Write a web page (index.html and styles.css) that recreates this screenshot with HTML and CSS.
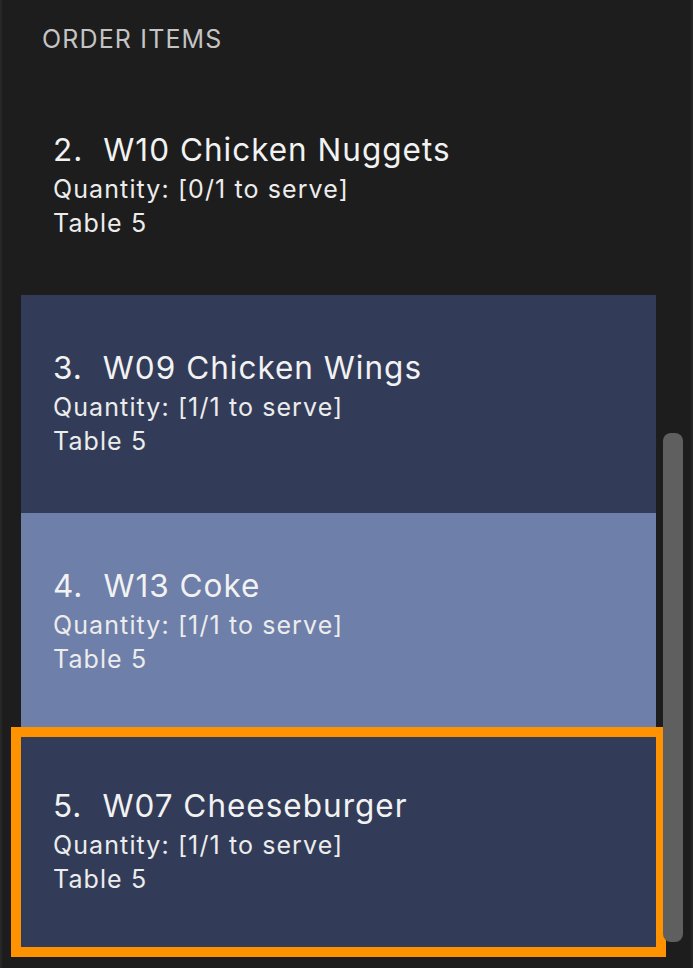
FILE: index.html
```html
<!DOCTYPE html>
<html>
<head>
<meta charset="utf-8">
<link rel="stylesheet" href="styles.css">
</head>
<body>
<div class="panel">
  <div class="main">
    <div class="header">ORDER ITEMS</div>
    <div class="list">
      <div class="cell">
        <div class="title"><span class="num">2.</span><span>W10 Chicken Nuggets</span></div>
        <div class="line qty">Quantity: [0/1 to serve]</div>
        <div class="line">Table 5</div>
      </div>
      <div class="cell navy">
        <div class="title"><span class="num">3.</span><span>W09 Chicken Wings</span></div>
        <div class="line qty">Quantity: [1/1 to serve]</div>
        <div class="line">Table 5</div>
      </div>
      <div class="cell light short">
        <div class="title"><span class="num">4.</span><span>W13 Coke</span></div>
        <div class="line qty">Quantity: [1/1 to serve]</div>
        <div class="line">Table 5</div>
      </div>
      <div class="cell navy focused">
        <div class="title"><span class="num">5.</span><span>W07 Cheeseburger</span></div>
        <div class="line qty">Quantity: [1/1 to serve]</div>
        <div class="line">Table 5</div>
      </div>
    </div>
  </div>
  <div class="scroll">
    <div class="thumb"></div>
  </div>
</div>
</body>
</html>
```
FILE: styles.css
```css
html, body {
  margin: 0;
  padding: 0;
  background: #1d1d1d;
}
body {
  width: 693px;
  height: 968px;
  overflow: hidden;
  font-family: Inter, "Noto Sans", sans-serif;
}
.panel {
  display: flex;
  height: 968px;
  box-sizing: border-box;
  border-left: 2px solid #262626;
  border-right: 2px solid #262626;
}
.main {
  width: 654px;
  display: flex;
  flex-direction: column;
}
.header {
  height: 77px;
  box-sizing: border-box;
  padding: 24px 0 0 40px;
  font-size: 25px;
  line-height: 30px;
  color: #c4c4c4;
  letter-spacing: 1.15px;
}
.list {
  display: flex;
  flex-direction: column;
  padding-left: 19px;
}
.cell {
  width: 635px;
  height: 218px;
  box-sizing: border-box;
  padding: 52px 0 0 32px;
  color: #ececec;
}
.cell.short {
  height: 214px;
}
.navy {
  background: #323c58;
}
.light {
  background: #6e7fa9;
}
.focused {
  width: 655px;
  height: 230px;
  margin-left: -10px;
  border: 10px solid #ff9200;
  padding: 48px 0 0 32px;
}
.title {
  font-size: 31.5px;
  line-height: 42px;
  letter-spacing: 1px;
  display: flex;
  gap: 20px;
  color: #f2f2f2;
}
.line {
  font-size: 25px;
  line-height: 34px;
  letter-spacing: 1.1px;
}
.qty {
  margin-top: 1px;
}
.scroll {
  width: 20px;
  margin-left: 7px;
  padding-top: 433px;
}
.thumb {
  height: 509px;
  background: #5f5f5f;
  border-radius: 8px;
}
```
